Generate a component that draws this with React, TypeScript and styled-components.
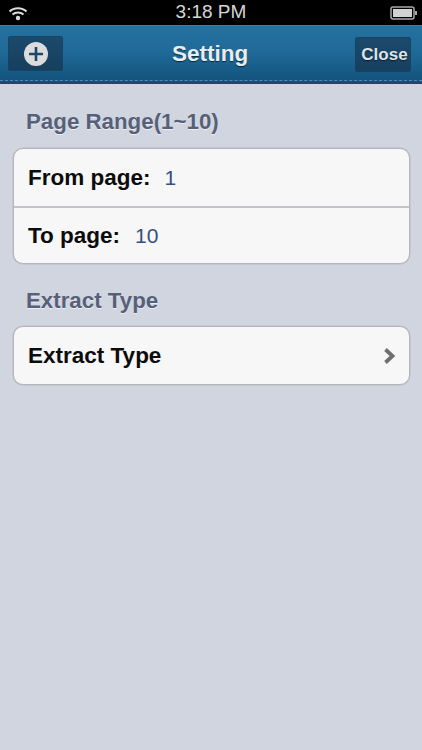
import React from 'react'
import styled, { createGlobalStyle } from 'styled-components'

const GlobalStyle = createGlobalStyle`
  html, body {
    margin: 0;
    padding: 0;
    background: #d0d5df;
  }
  * {
    box-sizing: border-box;
  }
`;

const Page = styled.div`
  width: 422px;
  height: 750px;
  overflow: hidden;
  display: flex;
  flex-direction: column;
  background: #d0d5df;
  font-family: "Liberation Sans", Arial, sans-serif;
`;

const StatusBar = styled.div`
  height: 25px;
  flex: none;
  padding: 0 4px 0 8px;
  display: flex;
  align-items: center;
  justify-content: space-between;
  position: relative;
  background: #000;
  color: #d6d6d6;
`;

const Clock = styled.span`
  position: absolute;
  left: 0;
  right: 0;
  top: 2px;
  text-align: center;
  font-size: 19px;
  line-height: 20px;
  font-weight: 400;
`;

const NavBar = styled.header`
  height: 59px;
  flex: none;
  padding: 10px 11px 0 8px;
  display: flex;
  align-items: flex-start;
  justify-content: space-between;
  position: relative;
  border-top: 1px solid #3a80a8;
  background: linear-gradient(#24709f 0%, #1f6a98 45%, #12507b 100%);
  box-shadow: inset 0 -2px 0 #1c4a6b;
`;

const Stitch = styled.div`
  position: absolute;
  left: 0;
  right: 0;
  bottom: 3px;
  border-top: 1px dashed #6d9cb8;
  opacity: 0.75;
`;

const NavTitle = styled.h1`
  position: absolute;
  left: 0;
  right: 2px;
  top: 16px;
  margin: 0;
  text-align: center;
  font-size: 22.5px;
  line-height: 24px;
  font-weight: 700;
  color: #e8edf1;
  text-shadow: 0 1px 1px rgba(0, 0, 0, 0.6);
`;

const NavButton = styled.button<{ $wide?: boolean }>`
  height: 35px;
  width: ${(p) => (p.$wide ? 56 : 55)}px;
  margin-top: ${(p) => (p.$wide ? 1 : 0)}px;
  padding: 0 0 0 ${(p) => (p.$wide ? 3 : 0)}px;
  display: flex;
  align-items: center;
  justify-content: center;
  border: 1px solid #164463;
  border-radius: 2px;
  background: linear-gradient(#1b4a6c, #173f5e);
  color: #dfe4e8;
  font-family: inherit;
  font-size: 17px;
  font-weight: 700;
  text-shadow: 0 1px 1px rgba(0, 0, 0, 0.6);
`;

const Content = styled.main`
  flex: 1;
  padding: 25px 12px 0 13px;
`;

const SectionTitle = styled.h2<{ $first?: boolean }>`
  margin: 0 0 ${(p) => (p.$first ? 13 : 12)}px 13px;
  font-size: 22.3px;
  line-height: 26px;
  font-weight: 700;
  color: #566079;
  text-shadow: 0 1px 0 rgba(255, 255, 255, 0.6);
`;

const Group = styled.section`
  margin-bottom: 24px;
  border: 1px solid #b3b6bc;
  border-radius: 10px;
  background: #f7f7f7;
  overflow: hidden;
  box-shadow: 0 0 0 0.5px #b9bcc2;
`;

const Row = styled.div`
  height: 57px;
  padding: 0 14px;
  display: flex;
  align-items: center;
  font-size: 22.5px;
  font-weight: 700;
  color: #0c0c0c;

  & + & {
    border-top: 2px solid #c2c4c9;
  }
`;

const RowValue = styled.span<{ $gap: number }>`
  margin-left: ${(p) => p.$gap}px;
  font-size: 21px;
  font-weight: 400;
  color: #34507f;
`;

const Chevron = styled.svg`
  margin-left: auto;
  margin-right: -2px;
`;

const WifiIcon = () => (
  <svg width="20" height="16" viewBox="0 0 20 16">
    <g fill="none" stroke="#dcdcdc" strokeWidth="2">
      <path d="M1.5 6.5C6 2 14 2 18.5 6.5" />
      <path d="M4.5 9.5C7.5 6.8 12.5 6.8 15.5 9.5" />
    </g>
    <circle cx="10" cy="13" r="2.2" fill="#dcdcdc" />
  </svg>
);

const BatteryIcon = () => (
  <svg width="28" height="14" viewBox="0 0 28 14">
    <rect x="1" y="1" width="23" height="12" rx="2" fill="none" stroke="#a9a9a9" strokeWidth="1.5" />
    <rect x="3" y="3" width="19" height="8" fill="#d2d2d2" />
    <rect x="25" y="5" width="2" height="4" fill="#a9a9a9" />
  </svg>
);

const PlusIcon = () => (
  <svg width="24" height="24" viewBox="0 0 24 24">
    <circle cx="12" cy="12" r="12" fill="#dcdcdc" />
    <path d="M12 5v14M5 12h14" stroke="#1c4767" strokeWidth="2.6" />
  </svg>
);

const App = () => {
  return (
    <Page>
      <GlobalStyle />
      <StatusBar>
        <WifiIcon />
        <Clock>3:18 PM</Clock>
        <BatteryIcon />
      </StatusBar>
      <NavBar>
        <NavButton aria-label="Add">
          <PlusIcon />
        </NavButton>
        <NavTitle>Setting</NavTitle>
        <NavButton $wide>Close</NavButton>
        <Stitch />
      </NavBar>
      <Content>
        <SectionTitle $first>Page Range(1~10)</SectionTitle>
        <Group>
          <Row>
            From page:<RowValue $gap={14}>1</RowValue>
          </Row>
          <Row>
            To page:<RowValue $gap={15}>10</RowValue>
          </Row>
        </Group>
        <SectionTitle>Extract Type</SectionTitle>
        <Group>
          <Row>
            Extract Type
            <Chevron width="14" height="18" viewBox="0 0 14 18">
              <path d="M2.5 2.5l7 6.5-7 6.5" fill="none" stroke="#6f6f6f" strokeWidth="3.8" />
            </Chevron>
          </Row>
        </Group>
      </Content>
    </Page>
  )
}

export default App
